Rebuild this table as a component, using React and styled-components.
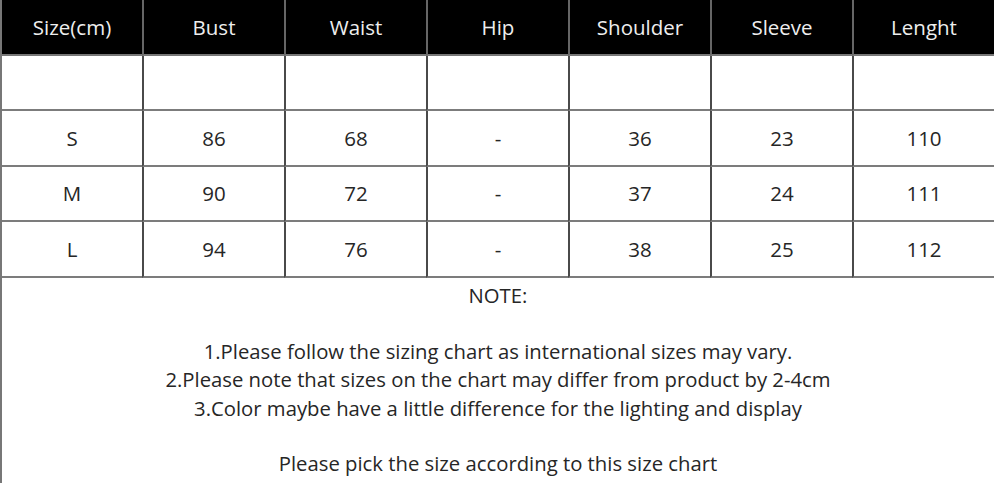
import React from 'react'
import styled, { createGlobalStyle } from 'styled-components'

const GlobalStyle = createGlobalStyle`
  html, body {
    margin: 0;
    padding: 0;
    background: #fff;
  }
  body {
    font-family: "Open Sans", "Noto Sans", sans-serif;
    color: #222;
  }
`

const headers = ['Size(cm)', 'Bust', 'Waist', 'Hip', 'Shoulder', 'Sleeve', 'Lenght']
const rows = [
  ['S', '86', '68', '-', '36', '23', '110'],
  ['M', '90', '72', '-', '37', '24', '111'],
  ['L', '94', '76', '-', '38', '25', '112'],
]
const notes = [
  '1.Please follow the sizing chart as international sizes may vary.',
  '2.Please note that sizes on the chart may differ from product by 2-4cm',
  '3.Color maybe have a little difference for the lighting and display',
]

export default function App() {
  return (
    <Page>
      <GlobalStyle />
      <Grid>
        {headers.map((h) => (
          <HeadCell key={h}>{h}</HeadCell>
        ))}
        {headers.map((h) => (
          <Cell key={'blank-' + h} />
        ))}
        {rows.map((row) =>
          row.map((v, i) => <Cell key={row[0] + i}>{v}</Cell>)
        )}
      </Grid>
      <Notes>
        <NoteTitle>NOTE:</NoteTitle>
        <NoteList>
          {notes.map((n) => (
            <NoteLine key={n}>{n}</NoteLine>
          ))}
        </NoteList>
        <Footer>Please pick the size according to this size chart</Footer>
      </Notes>
    </Page>
  )
}

const Page = styled.div`
  width: 994px;
  height: 483px;
  border-left: 2px solid #777;
  box-sizing: border-box;
  overflow: hidden;
`

const Grid = styled.div`
  display: grid;
  grid-template-columns: repeat(7, 1fr);
  margin-left: -2px;
`

const Cell = styled.div`
  height: 55.5px;
  box-sizing: border-box;
  display: flex;
  align-items: center;
  justify-content: center;
  border-left: 2px solid #4a4a4a;
  border-bottom: 2px solid #7c7c7c;
  font-size: 20.5px;
  color: #262626;
  &:nth-child(7n + 1) {
    border-left-color: #777;
  }
`

const HeadCell = styled(Cell)`
  padding-top: 1px;
  background: #000;
  color: #eee;
  border-left-color: #666;
  border-bottom-color: #777;
  &:nth-child(7n + 1) {
    border-left-color: #777;
  }
`

const Notes = styled.div`
  display: flex;
  flex-direction: column;
  align-items: center;
  font-size: 20.3px;
  color: #262626;
`

const NoteTitle = styled.div`
  margin-top: 3px;
  line-height: 28px;
`

const NoteList = styled.div`
  margin-top: 28px;
  display: flex;
  flex-direction: column;
  align-items: center;
  line-height: 28.5px;
`

const NoteLine = styled.div``

const Footer = styled.div`
  margin-top: 27px;
  line-height: 28px;
`
